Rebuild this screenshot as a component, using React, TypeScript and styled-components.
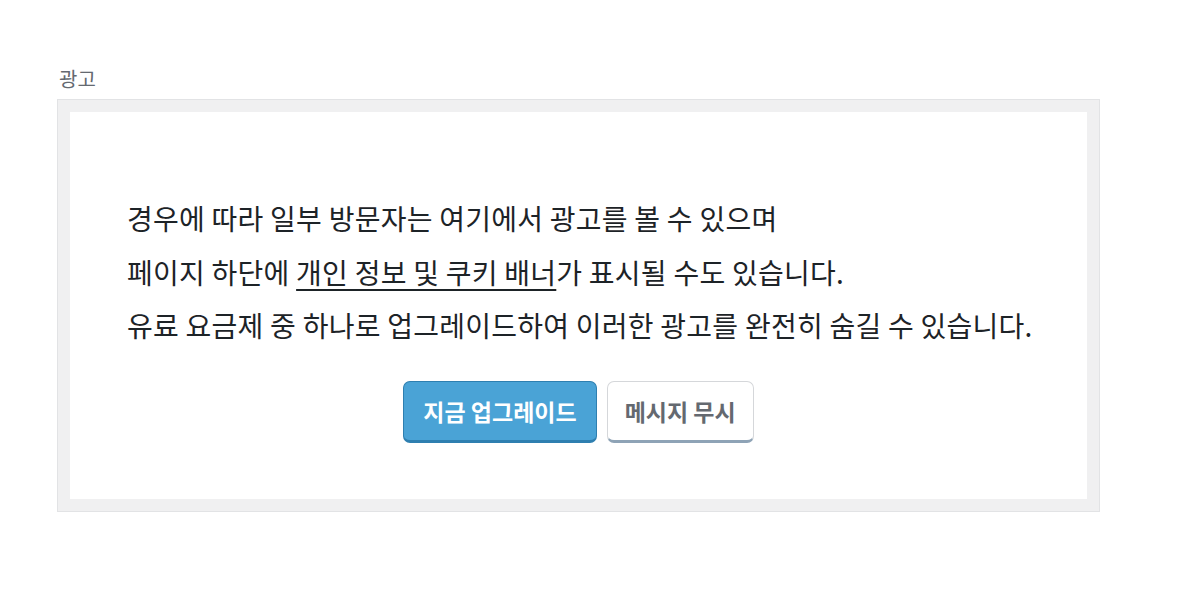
import React from 'react'
import styled, { createGlobalStyle } from 'styled-components'

const GlobalStyle = createGlobalStyle`
  body {
    margin: 0;
    background: #ffffff;
    font-family: "Noto Sans CJK KR", "Noto Sans", sans-serif;
  }
`

const Page = styled.div`
  padding: 64px 100px 0 57px;
`

const AdLabel = styled.div`
  font-size: 20px;
  line-height: 30px;
  color: #646970;
  padding-left: 2px;
  margin-bottom: 5px;
`

const Frame = styled.div`
  width: 1043px;
  box-sizing: border-box;
  border: 1px solid #e2e3e5;
  background: #f0f0f1;
  padding: 12px;
`

const Panel = styled.div`
  background: #ffffff;
  height: 387px;
  box-sizing: border-box;
  padding: 80px 57px 0 57px;
`

const Message = styled.p`
  margin: 0;
  font-size: 28px;
  line-height: 53.5px;
  letter-spacing: 0.25px;
  color: #1d2327;
  white-space: nowrap;
`

const PolicyLink = styled.a`
  color: #1d2327;
  text-decoration: underline;
  text-underline-offset: 5px;
  text-decoration-thickness: 2px;
`

const Actions = styled.div`
  display: flex;
  justify-content: center;
  gap: 10px;
  margin-top: 28px;
`

type ButtonVariation = 'primary' | 'secondary'

const Button = styled.button<{ $variation: ButtonVariation }>`
  height: 62px;
  box-sizing: border-box;
  padding: 0 ${(p) => (p.$variation === 'primary' ? '19px' : '17px')};
  font-family: inherit;
  font-size: 23px;
  font-weight: 700;
  border-radius: 7px;
  cursor: pointer;
  color: ${(p) => (p.$variation === 'primary' ? '#ffffff' : '#646970')};
  background: ${(p) => (p.$variation === 'primary' ? '#4aa3d6' : '#ffffff')};
  border: 1px solid ${(p) => (p.$variation === 'primary' ? '#2e7fb0' : '#d5d7da')};
  border-bottom: 3px solid ${(p) => (p.$variation === 'primary' ? '#2e7fb0' : '#8ea3b6')};
`

export default function App() {
  return (
    <>
      <GlobalStyle />
      <Page>
        <AdLabel>광고</AdLabel>
        <Frame>
          <Panel>
            <Message>경우에 따라 일부 방문자는 여기에서 광고를 볼 수 있으며</Message>
            <Message>
              페이지 하단에 <PolicyLink href="#">개인 정보 및 쿠키 배너</PolicyLink>가 표시될 수도 있습니다.
            </Message>
            <Message>유료 요금제 중 하나로 업그레이드하여 이러한 광고를 완전히 숨길 수 있습니다.</Message>
            <Actions>
              <Button $variation="primary">지금 업그레이드</Button>
              <Button $variation="secondary">메시지 무시</Button>
            </Actions>
          </Panel>
        </Frame>
      </Page>
    </>
  )
}
